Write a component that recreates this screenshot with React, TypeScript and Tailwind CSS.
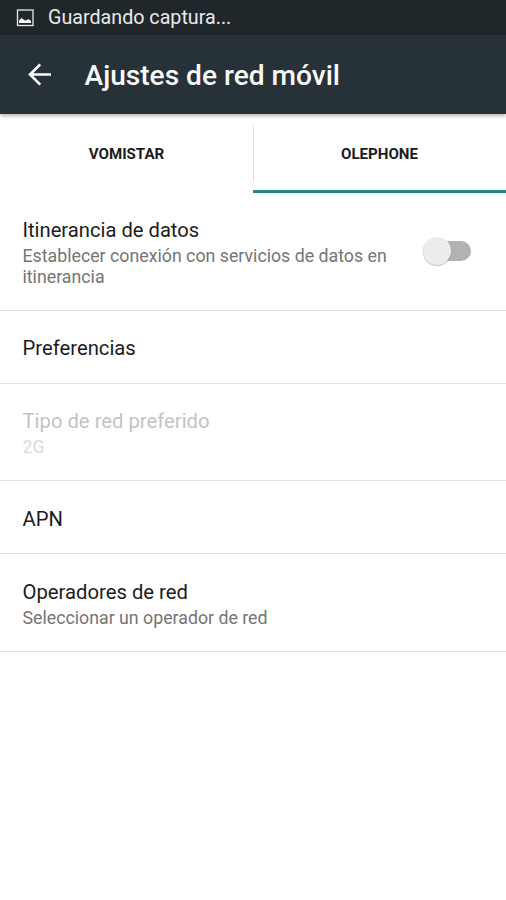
import React, { useState } from 'react';

interface Setting {
  id: string;
  title: string;
  summary?: string;
  disabled?: boolean;
  height: string;
}

const SIMS = ['VOMISTAR', 'OLEPHONE'];

const SETTINGS: Setting[] = [
  { id: 'preferences', title: 'Preferencias', height: 'h-[73px] pt-[2px]' },
  { id: 'network-type', title: 'Tipo de red preferido', summary: '2G', disabled: true, height: 'h-[97px] pt-[3px]' },
  { id: 'apn', title: 'APN', height: 'h-[73px] pt-[4px]' },
  { id: 'operators', title: 'Operadores de red', summary: 'Seleccionar un operador de red', height: 'h-[98px] pt-[4px]' },
];

const SettingRow = ({ setting }: { setting: Setting }) => (
  <div className={`${setting.height} flex flex-col justify-center border-b border-[#e1e1e1] px-[22.5px]`}>
    <div className={`text-[20.25px] leading-[26px] ${setting.disabled ? 'text-[#c3c3c3]' : 'text-[#1c1c1c]'}`}>
      {setting.title}
    </div>
    {setting.summary && (
      <div className={`text-[17.75px] leading-[26px] ${setting.disabled ? 'text-[#dadada]' : 'text-[#757575]'}`}>
        {setting.summary}
      </div>
    )}
  </div>
);

const App = () => {
  const [activeSim, setActiveSim] = useState(1);
  const [roaming, setRoaming] = useState(false);

  return (
    <div className="h-[900px] w-[506px] overflow-hidden bg-white font-['Roboto',sans-serif]">
      {/* Status bar */}
      <div className="flex h-[35px] items-center bg-[#20272b] pl-[16px] text-[19.7px] text-[#e8eaea]">
        <svg width="18" height="18" viewBox="0 0 18 18" className="mr-[14px]">
          <rect x="1.5" y="1" width="15.5" height="15.5" fill="none" stroke="#e8eaea" strokeWidth="1.3" />
          <path d="M3 14V11.5L5.5 9L7.5 10.5L9 11.5L11 11L12.3 10L15 12V14Z" fill="#fff" />
        </svg>
        <span>Guardando captura...</span>
      </div>

      {/* Toolbar */}
      <header className="relative flex h-[79px] items-center bg-[#263238] pl-[27px] shadow-[0_2px_4px_rgba(0,0,0,0.3)]">
        <button className="mr-[32.5px]" aria-label="Atrás">
          <svg width="25" height="25" viewBox="0 0 25 25" fill="none" stroke="#fff" strokeWidth="2.6">
            <path d="M24 12.5H3M13.2 2.3L3 12.5L13.2 22.7" />
          </svg>
        </button>
        <h1 className="pt-[4px] text-[28.1px] font-medium text-[#fafafa]">Ajustes de red móvil</h1>
      </header>

      {/* SIM tabs */}
      <div className="flex h-[79px]">
        {SIMS.map((sim, index) => (
          <button
            key={sim}
            onClick={() => setActiveSim(index)}
            className={`relative flex-1 border-b-[3px] pt-[4px] text-[15.1px] font-bold text-[#1c1c1c] ${
              activeSim === index ? 'border-[#26897f]' : 'border-transparent'
            }`}
          >
            {sim}
            {index > 0 && <span className="absolute top-[11px] left-0 h-[57px] w-px bg-[#e0e0e0]"></span>}
          </button>
        ))}
      </div>

      {/* Data roaming */}
      <div className="flex h-[118px] items-center justify-between border-b border-[#e1e1e1] pl-[22.5px] pr-[35px]">
        <div className="w-[375px] pt-[2px]">
          <div className="text-[20.2px] leading-[27px] text-[#1c1c1c]">Itinerancia de datos</div>
          <div className="pt-[2px] text-[17.75px] leading-[21px] text-[#757575]">
            Establecer conexión con servicios de datos en itinerancia
          </div>
        </div>
        <button
          role="switch"
          aria-checked={roaming}
          aria-label="Itinerancia de datos"
          onClick={() => setRoaming(!roaming)}
          className={`mb-px flex h-[20px] w-[48px] items-center rounded-full bg-[#b2b2b2] ${roaming ? 'justify-end' : ''}`}
        >
          <span className="h-[28px] w-[28px] shrink-0 rounded-full bg-[#ececec] shadow-[0_1px_1px_rgba(0,0,0,0.25)]"></span>
        </button>
      </div>

      {SETTINGS.map((setting) => (
        <SettingRow key={setting.id} setting={setting} />
      ))}
    </div>
  );
};

export default App;
